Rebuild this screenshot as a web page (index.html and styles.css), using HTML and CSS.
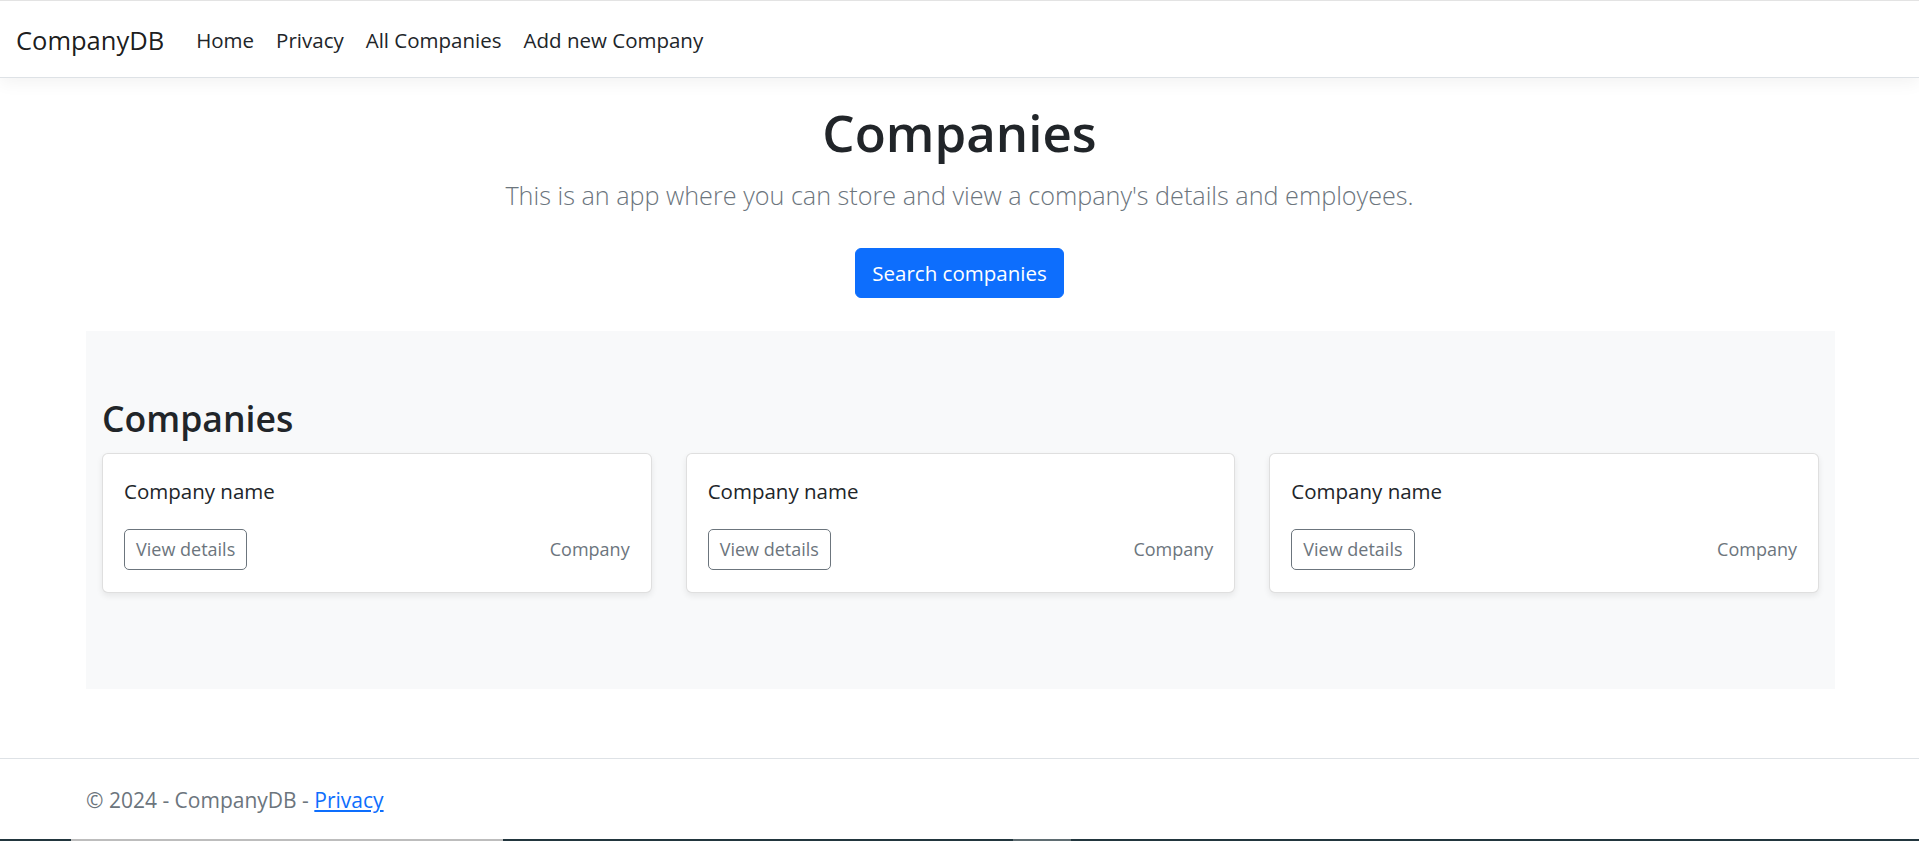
FILE: index.html
```html
<!DOCTYPE html>
<html lang="en">
<head>
<meta charset="utf-8">
<title>Companies - CompanyDB</title>
<link rel="stylesheet" href="styles.css">
</head>
<body>
<div class="page">
  <header class="navbar">
    <a class="brand" href="#">CompanyDB</a>
    <nav class="nav">
      <a class="nav-link" href="#">Home</a>
      <a class="nav-link" href="#">Privacy</a>
      <a class="nav-link" href="#">All Companies</a>
      <a class="nav-link" href="#">Add new Company</a>
    </nav>
  </header>

  <main class="main">
    <section class="hero">
      <h1 class="hero-title">Companies</h1>
      <p class="lead">This is an app where you can store and view a company's details and employees.</p>
      <a class="btn-primary" href="#">Search companies</a>
    </section>

    <section class="album">
      <h2 class="album-title">Companies</h2>
      <div class="cards">
        <div class="card">
          <p class="card-text">Company name</p>
          <div class="card-actions">
            <a class="btn-outline" href="#">View details</a>
            <small class="muted">Company</small>
          </div>
        </div>
        <div class="card">
          <p class="card-text">Company name</p>
          <div class="card-actions">
            <a class="btn-outline" href="#">View details</a>
            <small class="muted">Company</small>
          </div>
        </div>
        <div class="card">
          <p class="card-text">Company name</p>
          <div class="card-actions">
            <a class="btn-outline" href="#">View details</a>
            <small class="muted">Company</small>
          </div>
        </div>
      </div>
    </section>
  </main>

  <footer class="footer">
    <div class="footer-inner">&copy; 2024 - CompanyDB - <a class="footer-link" href="#">Privacy</a></div>
  </footer>
</div>
<div class="taskbar"></div>
</body>
</html>
```

FILE: styles.css
```css
* {
  box-sizing: border-box;
}

html,
body {
  margin: 0;
  padding: 0;
}

body {
  font-family: "Open Sans", "Noto Sans", sans-serif;
  font-size: 20.5px;
  line-height: 1.5;
  color: #212529;
  background: #fff;
}

.page {
  min-height: 100vh;
  display: flex;
  flex-direction: column;
}

/* ---------- navbar ---------- */
.navbar {
  position: relative;
  z-index: 1;
  display: flex;
  align-items: center;
  height: 78px;
  padding: 2px 16px 0;
  background: #fff;
  border-top: 1px solid #e3e3e3;
  border-bottom: 1px solid #dee2e6;
  box-shadow: 0 5px 16px rgba(0, 0, 0, 0.05);
}

.brand {
  font-size: 25.5px;
  color: rgba(0, 0, 0, 0.9);
  text-decoration: none;
  margin-right: 21px;
}

.nav {
  display: flex;
}

.nav-link {
  padding: 0 11px;
  font-size: 20.5px;
  color: #212529;
  text-decoration: none;
}

/* ---------- hero ---------- */
.main {
  flex: 1;
}

.hero {
  text-align: center;
  padding-top: 24px;
}

.hero-title {
  margin: 0 0 13px;
  font-size: 51px;
  font-weight: 600;
  line-height: 1.2;
}

.lead {
  margin: 0 0 34px;
  font-size: 25.2px;
  line-height: 38px;
  font-weight: 300;
  color: #6c757d;
}

.btn-primary {
  display: inline-block;
  padding: 8.6px 16px;
  background: #0d6efd;
  border: 1px solid #0d6efd;
  border-radius: 6px;
  color: #fff;
  text-decoration: none;
}

/* ---------- album ---------- */
.album {
  margin: 33px 84px 0 86px;
  padding: 66px 16px 96px;
  background: #f8f9fa;
}

.album-title {
  margin: 0 0 13px;
  font-size: 35.6px;
  font-weight: 600;
  line-height: 1.2;
}

.cards {
  display: grid;
  grid-template-columns: repeat(3, 1fr);
  gap: 34px;
}

.card {
  background: #fff;
  border: 1px solid rgba(0, 0, 0, 0.125);
  border-radius: 6px;
  box-shadow: 0 3px 6px rgba(0, 0, 0, 0.075);
  padding: 22px 21px 22px;
}

.card-text {
  margin: 0 0 22px;
  line-height: 31px;
}

.card-actions {
  display: flex;
  align-items: center;
  justify-content: space-between;
}

.btn-outline {
  display: inline-block;
  height: 41px;
  padding: 0 11px;
  line-height: 39px;
  font-size: 18px;
  color: #6c757d;
  border: 1px solid #6c757d;
  border-radius: 5px;
  text-decoration: none;
}

.muted {
  font-size: 18px;
  color: #6c757d;
}

/* ---------- footer ---------- */
.footer {
  border-top: 1px solid #dee2e6;
  line-height: 82px;
  font-size: 21px;
  color: #6c757d;
  white-space: nowrap;
}

.footer-inner {
  padding-left: 86px;
}

.footer-link {
  color: #0d6efd;
  text-decoration: underline;
}

.taskbar {
  position: fixed;
  left: 0;
  right: 0;
  bottom: 0;
  height: 2px;
  background: linear-gradient(to right,
    #22363e 0 71px,
    #bdbdbd 71px 503px,
    #22363e 503px 1013px,
    #5f6d72 1013px 1071px,
    #22363e 1071px);
}
```
